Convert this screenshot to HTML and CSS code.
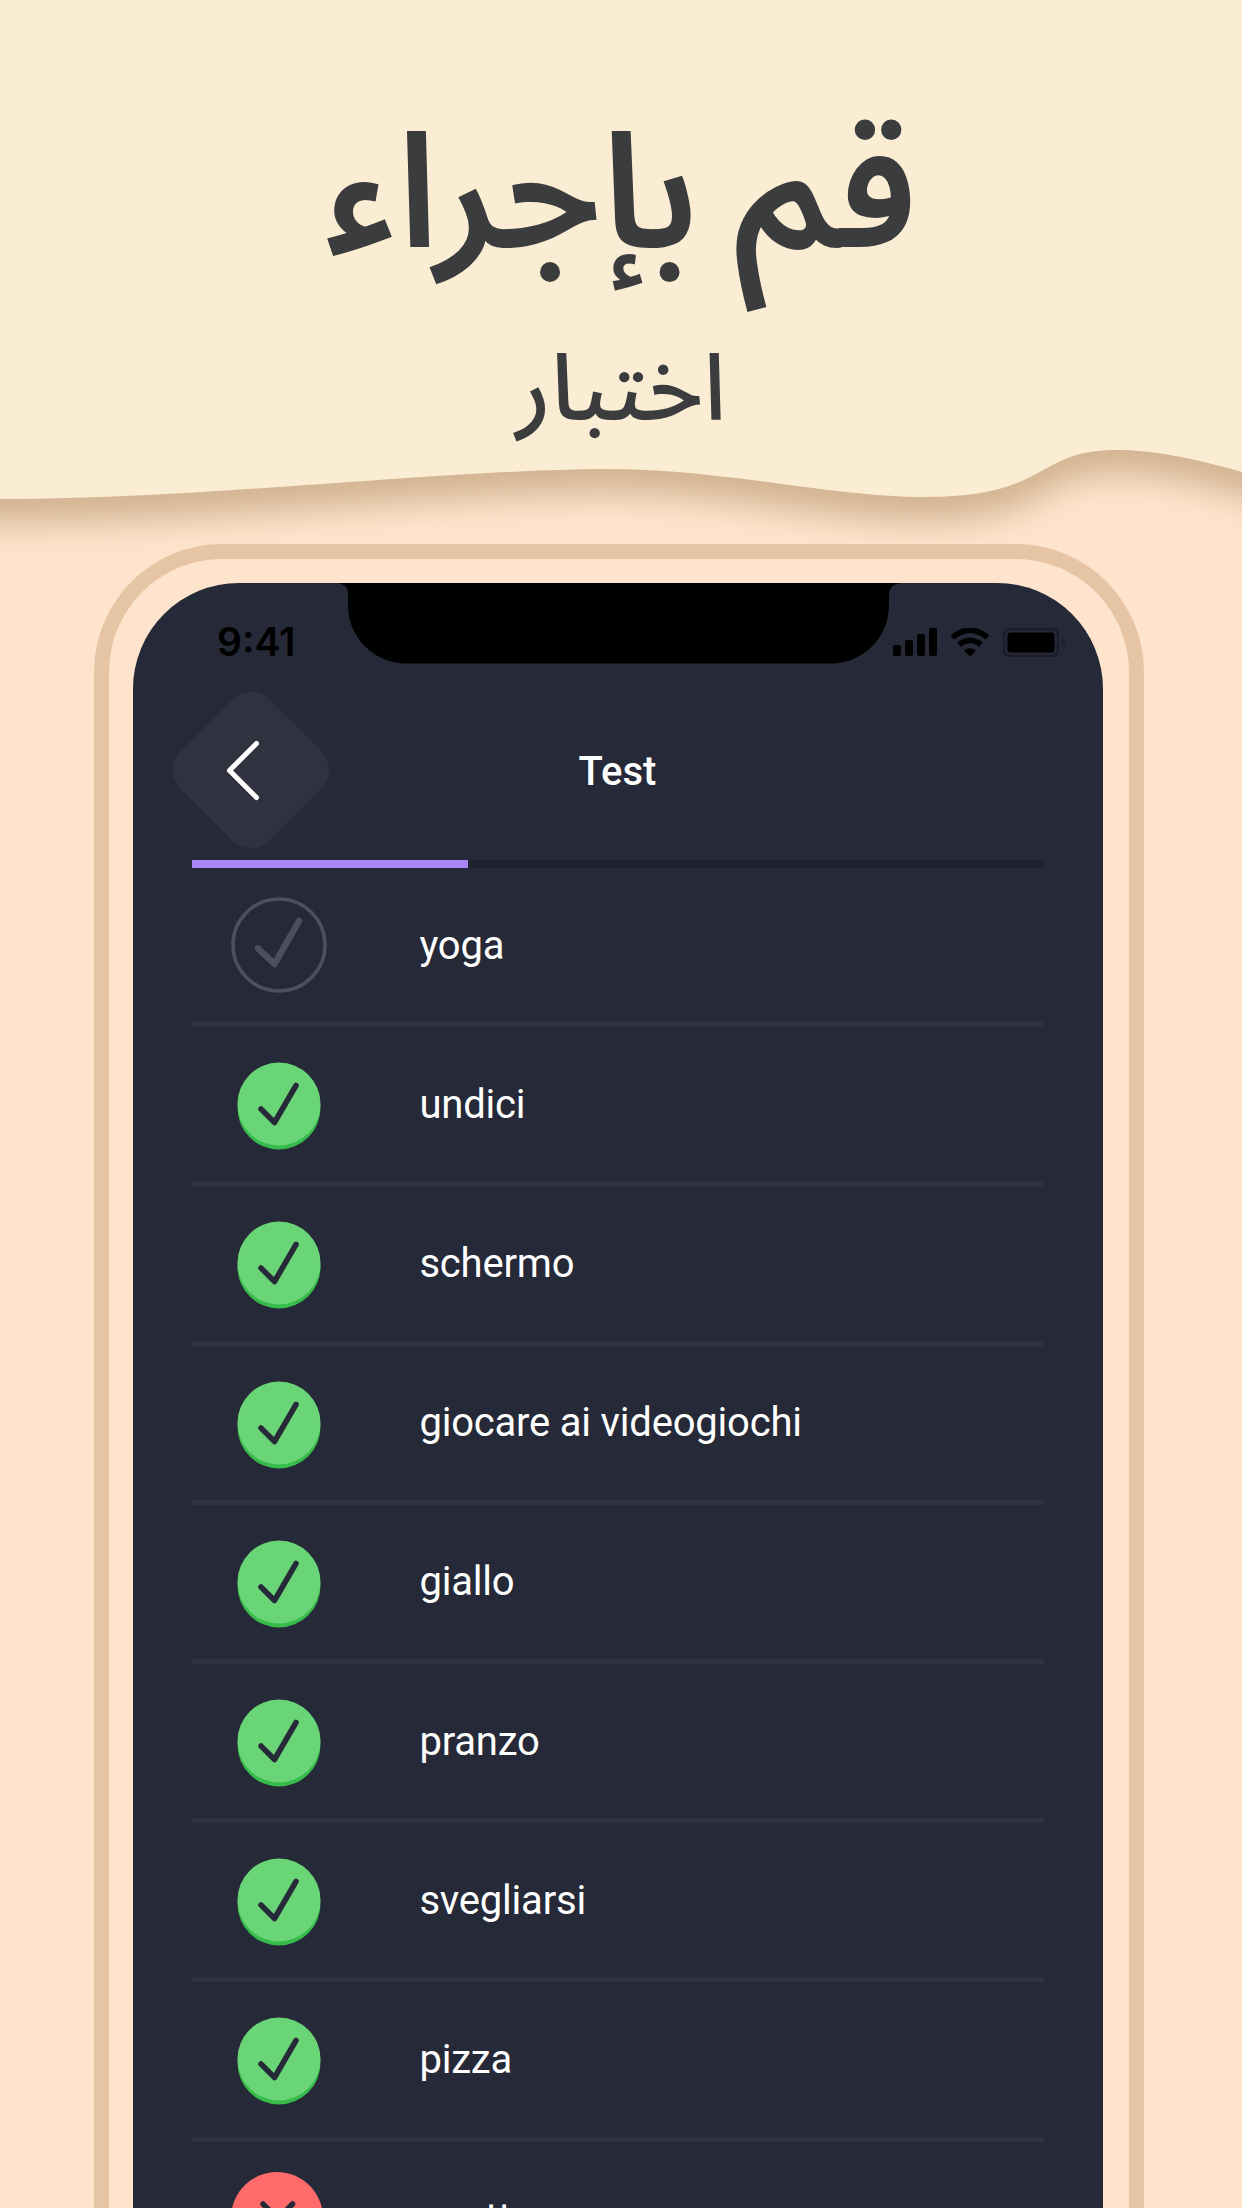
FILE: index.html
```
<!DOCTYPE html>
<html lang="ar">
<head>
    <meta charset="UTF-8">
    <meta name="viewport" content="width=device-width, initial-scale=1.0">
    <title>قم بإجراء اختبار</title>
    <link rel="stylesheet" href="styles.css">
</head>
<body>
    <header class="hero">
        <svg class="wave" viewBox="0 0 1242 600">
            <path d="M-60 -60 H1302 V492 C1280 484 1262 478 1242 472 C1190 457 1150 450 1116 450 C1035 450 1050 497 926 497 C835 497 720 469 610 469 C450 469 210 499 0 499 L-60 499 Z"/>
        </svg>
        <h1 dir="rtl"><span>قم</span> بإجراء</h1>
        <h2 dir="rtl">اختبار</h2>
    </header>

    <div class="phone">
        <div class="screen">
            <div class="status-bar">
                <span class="time">9:41</span>
                <svg class="notch" viewBox="0 0 564 81">
                    <path d="M0 0 H564 Q551 1 551 12 V22 A58 58 0 0 1 493 80.500 H68 A58 58 0 0 1 10 22 V12 Q10 1 0 0 Z"/>
                </svg>
                <div class="status-icons">
                    <svg width="44" height="28" viewBox="0 0 44 28">
                        <rect x="0" y="17" width="8" height="11" rx="2"/>
                        <rect x="12" y="12" width="8" height="16" rx="2"/>
                        <rect x="24" y="6" width="8" height="22" rx="2"/>
                        <rect x="36" y="0" width="8" height="28" rx="2"/>
                    </svg>
                    <svg width="40" height="29" viewBox="0 0 40 29">
                        <path d="M2.5 9.5 Q20 -5 37.500 9.500" fill="none" stroke="#000" stroke-width="5.500"/>
                        <path d="M9 16.500 Q20 8 31 16.500" fill="none" stroke="#000" stroke-width="5.500"/>
                        <path d="M14 22.500 Q20 18 26 22.500 L20 28.500 Z"/>
                    </svg>
                    <svg width="62" height="29" viewBox="0 0 62 29">
                        <rect class="battery-outline" x="1" y="1" width="54" height="27" rx="6"/>
                        <rect x="4.500" y="4.500" width="47" height="20" rx="3"/>
                        <path class="battery-cap" d="M59 10 Q62 12 62 14.500 Q62 17 59 19 Z"/>
                    </svg>
                </div>
            </div>

            <div class="nav">
                <div class="back">
                    <svg width="158" height="158" viewBox="0 0 158 158">
                        <rect x="16" y="16" width="126" height="126" rx="26" transform="rotate(45 79 79)"/>
                        <path d="M84.500 52.500 L57.500 79.500 L84.500 106.500"/>
                    </svg>
                </div>
                <div class="title">Test</div>
            </div>

            <div class="progress-bar">
                <div class="progress-fill"></div>
            </div>

            <ul class="words" id="words"></ul>
        </div>
    </div>

    <script>
        const words = [
            { text: "yoga", state: "empty" },
            { text: "undici", state: "correct" },
            { text: "schermo", state: "correct" },
            { text: "giocare ai videogiochi", state: "correct" },
            { text: "giallo", state: "correct" },
            { text: "pranzo", state: "correct" },
            { text: "svegliarsi", state: "correct" },
            { text: "pizza", state: "correct" },
            { text: "quattro", state: "wrong" }
        ];

        const icons = {
            empty: '<circle cx="50" cy="50" r="46" /><path d="M29 53.500 L45.500 69 L70 26" />',
            correct: '<circle class="shade" cx="50" cy="54" r="41.500" /><circle cx="50" cy="50" r="41.500" /><path d="M32 55 L45.500 68.500 L67 31.500" />',
            wrong: '<circle class="shade" cx="48" cy="53" r="46" /><circle cx="48" cy="49" r="46" /><path d="M34 35 L63.500 64.500 M63.500 35 L34 64.500" />'
        };

        // Une ligne par mot
        document.getElementById("words").innerHTML = words.map(function(word) {
            return `<li class="word">
                <svg class="mark ${word.state}" viewBox="0 0 100 100">${icons[word.state]}</svg>
                <span>${word.text}</span>
            </li>`;
        }).join("");
    </script>
</body>
</html>
```
FILE: styles.css
```
* {
    box-sizing: border-box;
}

body {
    margin: 0;
    height: 2208px;
    overflow: hidden;
    background-color: #fee4cc;
    font-family: Roboto, sans-serif;
}

.hero {
    position: relative;
    height: 544px;
    padding-top: 65px;
    text-align: center;
    color: #3a3c3d;
    font-family: "Noto Sans Arabic UI", "Noto Sans Arabic", "DejaVu Sans", sans-serif;
}

.hero h1,
.hero h2 {
    position: relative;
    margin: 0;
}

.hero h1 {
    height: 264px;
    font-size: 160px;
    line-height: 240px;
    font-weight: 600;
    word-spacing: -6px;
}

.hero h1 span {
    font-family: "Noto Sans Arabic", sans-serif;
    font-size: 165px;
    line-height: 0;
}

.hero h2 {
    font-size: 93px;
    line-height: 110px;
    font-weight: 500;
}

.wave {
    position: absolute;
    left: 0;
    top: 0;
    width: 1242px;
    height: 600px;
    fill: #fbedd4;
    overflow: visible;
    filter: drop-shadow(0 24px 16px #d2b392);
}

.phone {
    position: relative;
    width: 1050px;
    height: 1664px;
    margin: 0 auto 0 94px;
    padding: 24px 26px 0 24px;
    border: 15px solid #e6c5a5;
    border-bottom: 0;
    border-radius: 128px 128px 0 0;
}

.screen {
    height: 1625px;
    border-radius: 106px 106px 0 0;
    background-color: #262937;
    overflow: hidden;
}

.status-bar {
    display: flex;
    height: 108px;
}

.time {
    width: 205px;
    padding: 36px 0 0 84px;
    font-family: Inter, sans-serif;
    font-size: 39px;
    line-height: 46px;
    font-weight: 600;
}

.notch {
    width: 564px;
    height: 81px;
}

.status-icons {
    display: flex;
    align-items: flex-start;
    gap: 13px;
    padding-top: 45px;
    margin-left: -9px;
}

.battery-outline {
    fill: none;
    stroke: #1b1d29;
    stroke-width: 2.5;
}

.battery-cap {
    fill: #1b1d29;
}

.nav {
    display: grid;
    grid-template-columns: 158px 1fr 158px;
    align-items: center;
    height: 158px;
    margin: 0 39px;
}

.back {
    height: 158px;
}

.back rect {
    fill: #31323f;
}

.back path {
    fill: none;
    stroke: #fff;
    stroke-width: 5;
    stroke-linecap: round;
    stroke-linejoin: round;
}

.title {
    padding: 2px 1px 0 0;
    color: #fff;
    font-size: 40px;
    font-weight: 500;
    text-align: center;
}

.progress-bar {
    height: 8px;
    margin: 11px 59px 0;
    background-color: #21222e;
}

.progress-fill {
    width: 276px;
    height: 100%;
    background-color: #a887f5;
}

.words {
    margin: 0 59px;
    padding: 0;
    list-style: none;
}

.word {
    display: flex;
    align-items: center;
    height: 159.2px;
    padding-left: 37px;
    border-bottom: 5px solid #303240;
    color: #fff;
    font-size: 40px;
    letter-spacing: -0.2px;
}

.mark {
    width: 100px;
    height: 100px;
    margin-right: 90.4px;
    fill: none;
    stroke-linecap: round;
    stroke-linejoin: round;
}

.mark path {
    stroke: #262937;
    stroke-width: 5.5;
}

.empty circle {
    stroke: #4d4f5d;
    stroke-width: 3.5;
}

.empty path {
    stroke: #4d4f5d;
    stroke-width: 6.5;
}

.correct circle {
    fill: #6ad577;
}

.correct .shade {
    fill: #37bb4a;
}

.wrong circle {
    fill: #ff6b6b;
}

.wrong .shade {
    fill: #d94848;
}
```
